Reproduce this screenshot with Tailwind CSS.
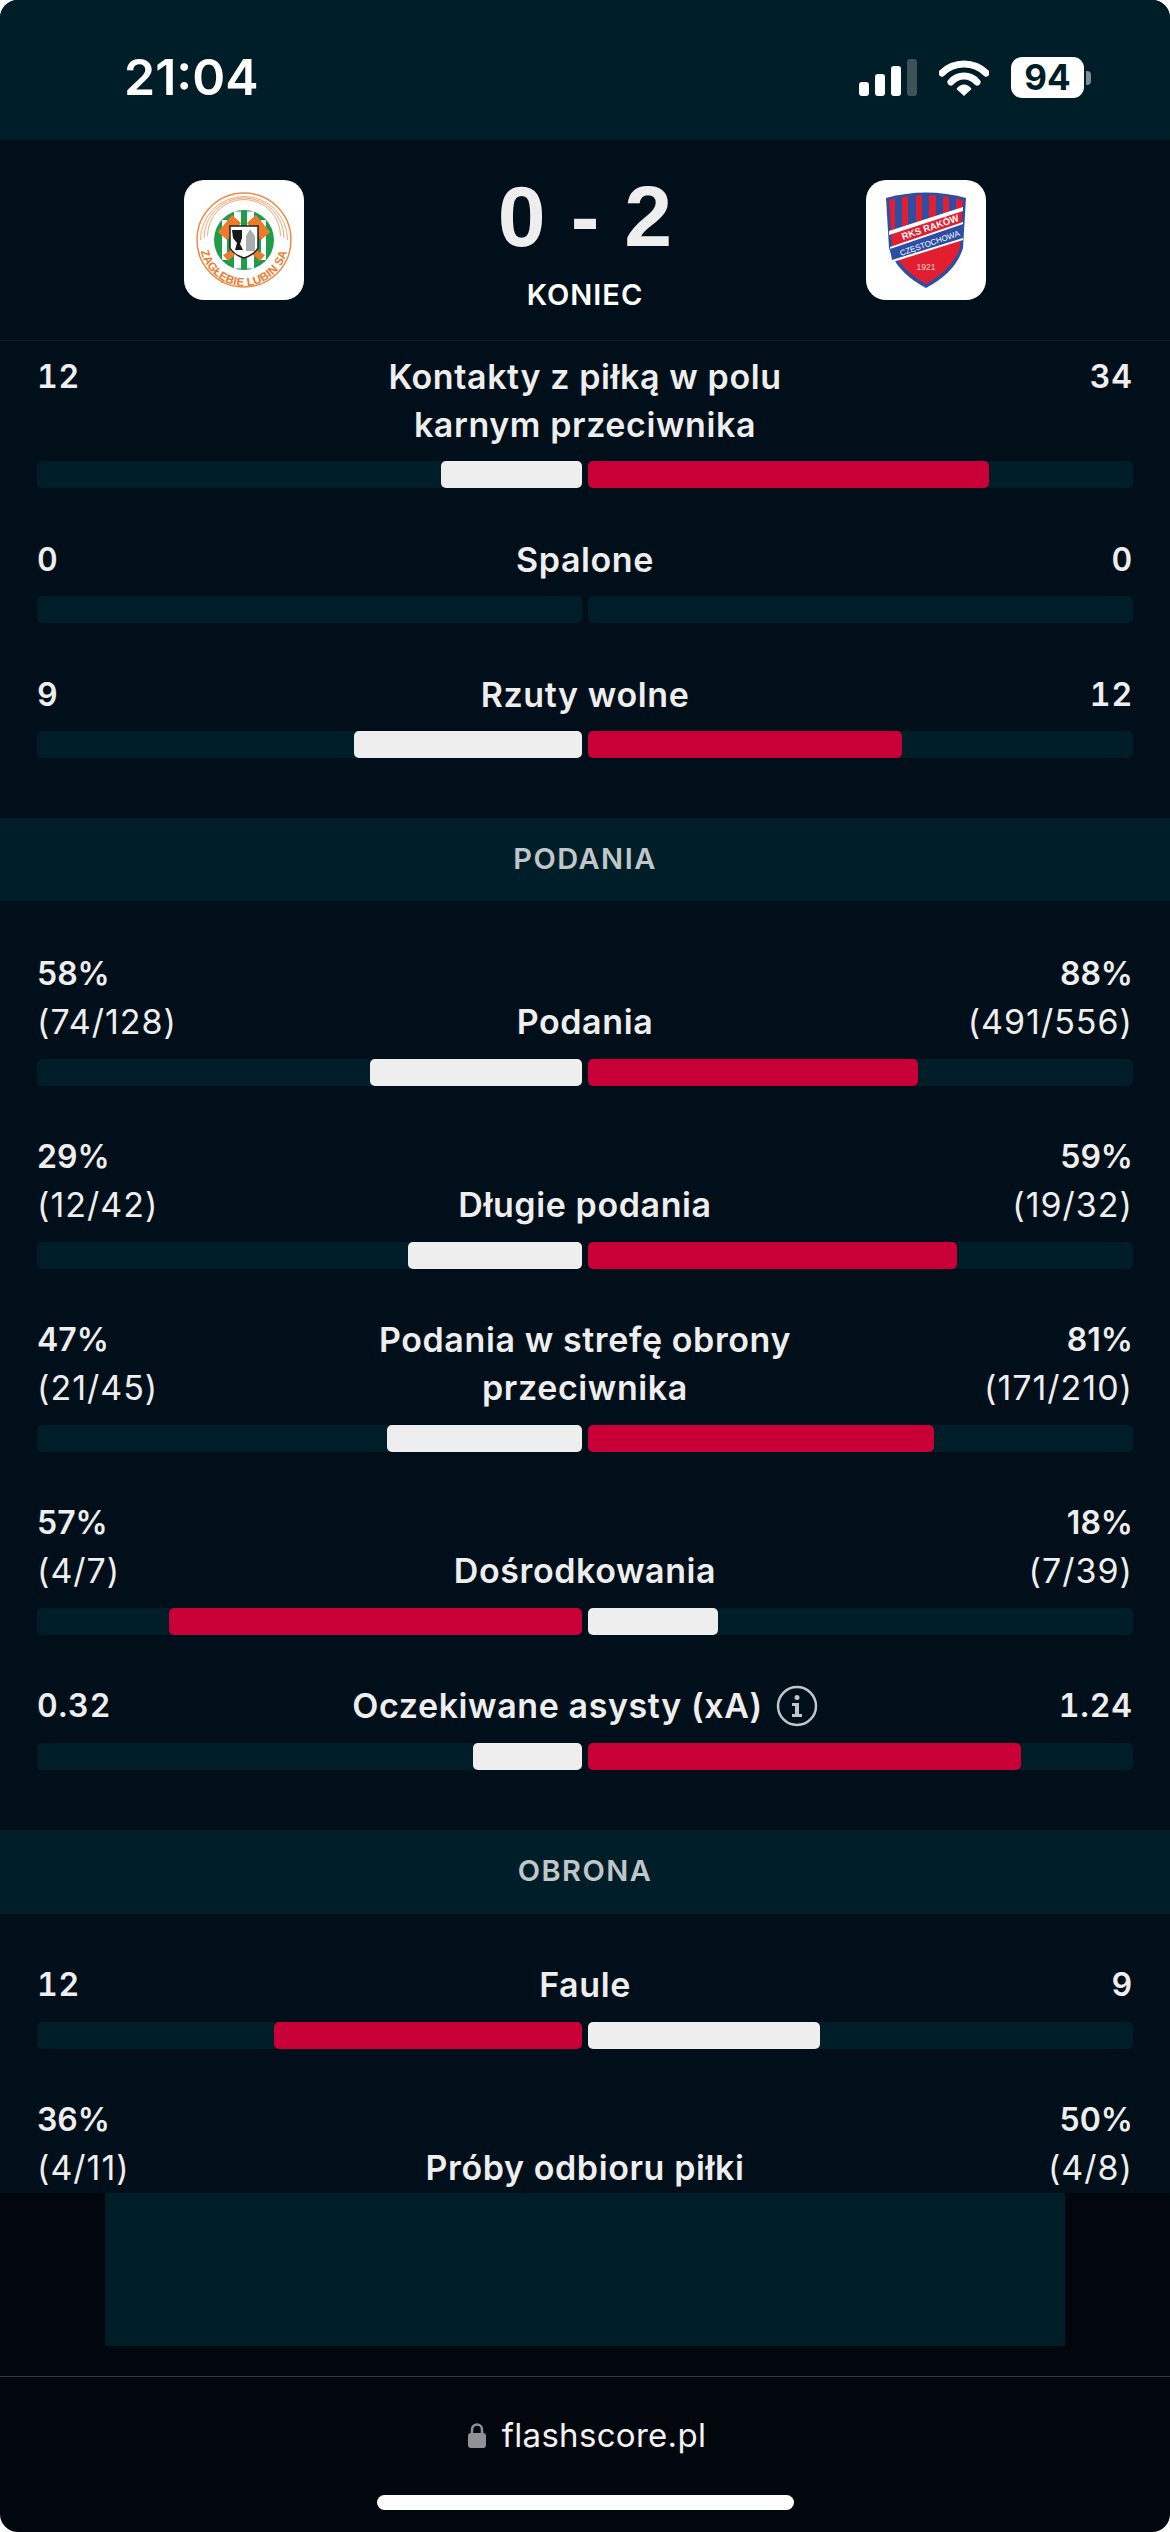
<!DOCTYPE html>
<html lang="pl">
<head>
  <meta charset="UTF-8" />
  <meta name="viewport" content="width=device-width, initial-scale=1.0" />
  <title>Flashscore</title>
  <script src="https://cdn.jsdelivr.net/npm/@tailwindcss/browser@4"></script>
</head>
<body class="bg-white">
  <div class="w-[1170px] h-[2532px] overflow-hidden rounded-[18px] bg-[#02070e] flex flex-col font-['Inter',sans-serif] text-[#eeeeee]">

    <!-- Status bar -->
    <div class="h-[140px] shrink-0 bg-[#001e28] flex items-start justify-between pl-[124px] pr-[79px] text-white">
      <div class="mt-[48px] text-[50px] leading-[58px] font-semibold">21:04</div>
      <div class="mt-[57px] flex items-start">
        <div class="flex items-end gap-[6px] h-[39px] mr-[22px]">
          <div class="w-[10px] h-[14px] rounded-[3px] bg-white"></div>
          <div class="w-[10px] h-[22px] rounded-[3px] bg-white"></div>
          <div class="w-[10px] h-[30px] rounded-[3px] bg-white"></div>
          <div class="w-[10px] h-[37px] rounded-[3px] bg-[#3f525a]"></div>
        </div>
        <svg class="mt-[2px] mr-[22px]" width="50" height="37" viewBox="0 0 50 37">
          <path d="M3 14 C15 2 35 2 47 14" fill="none" stroke="#fff" stroke-width="7" stroke-linecap="round" stroke-linejoin="round"/>
          <path d="M12 23 C19 15 31 15 38 23" fill="none" stroke="#fff" stroke-width="7" stroke-linecap="round"/>
          <path d="M17.5 30 C21 24 29 24 32.500 30 L25 37 Z" fill="#fff"/>
        </svg>
        <div class="w-[73px] h-[41px] rounded-[11px] bg-white text-[#001e28] text-[35px] leading-[41px] font-bold text-center">94</div>
        <div class="mt-[14px] ml-[2px] w-[5px] h-[14px] rounded-r-[4px] bg-[#7f8d93]"></div>
      </div>
    </div>

    <!-- Score header -->
    <div class="h-[201px] shrink-0 bg-[#010f1a] border-b border-[#06202b] flex items-start justify-between px-[184px] pt-[40px]">
      <div class="w-[120px] h-[120px] rounded-[20px] bg-white">
        <svg width="120" height="120" viewBox="0 0 120 120">
          <circle cx="60" cy="60" r="47" fill="none" stroke="#ee8a45" stroke-width="1.500"/>
          <path d="M16.500 60 A43.500 43.500 0 0 1 103.500 60" fill="none" stroke="#f3a673" stroke-width="1"/>
          <path d="M20 58 A40 40 0 0 1 100 58" fill="none" stroke="#f3a673" stroke-width="1"/>
          <path d="M23.500 56 A36.500 36.500 0 0 1 96.500 56" fill="none" stroke="#f3a673" stroke-width="1"/>
          <circle cx="60" cy="60" r="30" fill="#1f9b4c"/>
          <path d="M50 31.500 h7 v57 h-7 z M63 31.500 h7 v57 h-7 z M38 40 h5 v40 h-5 z M77 40 h5 v40 h-5 z" fill="#fff"/>
          <path d="M34 52 L48 35 L57 43 L43 60 Z M86 52 L72 35 L63 43 L77 60 Z M39 75 L48 70 L51 75 L44 81 Z M81 75 L72 70 L69 75 L76 81 Z" fill="#ee7a2b"/>
          <path d="M46 46 H74 V68 Q70 75 60 78 Q50 75 46 68 Z" fill="#fff" stroke="#222" stroke-width="1.500"/>
          <path d="M48 50 H58 V58 L56 64 L59 70 H51 L53 63 L49 58 Z" fill="#15181b"/>
          <path d="M62 56 L66 49 L71 56 V71 H62 Z" fill="#a9aeb2"/>
          <defs><path id="zl-arc" d="M14 62 A46 46 0 0 0 106 62"/></defs>
          <text font-family="Liberation Sans, sans-serif" font-weight="700" font-size="11.500" letter-spacing="0.5" fill="#ee7a2b" text-anchor="middle" dy="-2"><textPath href="#zl-arc" startOffset="50%">ZAGŁĘBIE LUBIN SA</textPath></text>
        </svg>
      </div>
      <div class="flex flex-col items-center">
        <div class="mt-[-14px] h-[100px] text-[86px] leading-[100px] font-bold font-['Liberation_Sans',sans-serif] whitespace-pre"><span>0</span><span class="mx-[25px]">-</span><span>2</span></div>
        <div class="mt-[11px] text-[29px] leading-[36px] font-semibold tracking-[1px] text-white">KONIEC</div>
      </div>
      <div class="w-[120px] h-[120px] rounded-[20px] bg-white">
        <svg width="120" height="120" viewBox="0 0 120 120">
          <path d="M20 18 Q60 7 100 18 L97 68 Q90 92 60 108 Q30 92 23 68 Z" fill="#2c4fa3"/>
          <path d="M23 20 Q60 10 97 20 L94 67 Q87 89 60 104 Q33 89 26 67 Z" fill="#e11f30"/>
          <path d="M29 18 h7 v32 h-7 z M42 14 h8 v32 h-8 z M56 13 h7 v29 h-7 z M70 14 h7 v24 h-7 z M83 16 h7 v17 h-7 z" fill="#2c4fa3"/>
          <path d="M23 51 L97 27 L97 31 L23 55 Z" fill="#fff"/>
          <path d="M24 67 L97 42 L97 60 L27 82 Z" fill="#fff"/>
          <path d="M24 69 L97 44 L97 58 L26 80 Z" fill="#2c4fa3"/>
          <text transform="translate(37 60) rotate(-19)" font-family="Liberation Sans, sans-serif" font-weight="700" font-size="9.500" fill="#fff">RKS RAKÓW</text>
          <text transform="translate(35 76) rotate(-19)" font-family="Liberation Sans, sans-serif" font-size="8" fill="#fff">CZĘSTOCHOWA</text>
          <text x="60" y="90" text-anchor="middle" font-family="Liberation Sans, sans-serif" font-size="8.500" fill="#f6d0d0">1921</text>
        </svg>
      </div>
    </div>

    <!-- Stats list, cut off at the ad slot -->
    <div class="h-[1852px] shrink-0 overflow-hidden bg-[#010f1a] text-[34px] leading-[48px] tracking-[0.6px]">

      <div class="pt-[12px] px-[37px]">
        <div class="flex justify-between items-start font-semibold"><span class="w-[150px] text-[32px] tracking-[0.9px] tabular-nums">12</span><span class="text-center">Kontakty z piłką w polu<br />karnym przeciwnika</span><span class="w-[150px] text-[32px] tracking-[0.9px] tabular-nums text-right">34</span></div>
        <div class="mt-[12px] flex gap-[6px]">
          <div class="flex-1 h-[27px] rounded-[5px] bg-[#001e28] flex justify-end"><div class="w-[141px] rounded-[5px] bg-[#eeeeee]"></div></div>
          <div class="flex-1 h-[27px] rounded-[5px] bg-[#001e28] flex"><div class="w-[401px] rounded-[5px] bg-[#c80037]"></div></div>
        </div>
      </div>

      <div class="mt-[48px] px-[37px]">
        <div class="flex justify-between items-start font-semibold"><span class="w-[150px] text-[32px] tracking-[0.9px] tabular-nums">0</span><span class="text-center">Spalone</span><span class="w-[150px] text-[32px] tracking-[0.9px] tabular-nums text-right">0</span></div>
        <div class="mt-[12px] flex gap-[6px]">
          <div class="flex-1 h-[27px] rounded-[5px] bg-[#001e28]"></div>
          <div class="flex-1 h-[27px] rounded-[5px] bg-[#001e28]"></div>
        </div>
      </div>

      <div class="mt-[48px] px-[37px]">
        <div class="flex justify-between items-start font-semibold"><span class="w-[150px] text-[32px] tracking-[0.9px] tabular-nums">9</span><span class="text-center">Rzuty wolne</span><span class="w-[150px] text-[32px] tracking-[0.9px] tabular-nums text-right">12</span></div>
        <div class="mt-[12px] flex gap-[6px]">
          <div class="flex-1 h-[27px] rounded-[5px] bg-[#001e28] flex justify-end"><div class="w-[228px] rounded-[5px] bg-[#eeeeee]"></div></div>
          <div class="flex-1 h-[27px] rounded-[5px] bg-[#001e28] flex"><div class="w-[314px] rounded-[5px] bg-[#c80037]"></div></div>
        </div>
      </div>

      <!-- PODANIA -->
      <div class="mt-[60px] h-[83px] pb-[2px] bg-[#001e28] flex items-center justify-center text-[29px] font-semibold tracking-[1.5px] text-[#c0c7ca]">PODANIA</div>

      <div class="mt-[49px] px-[37px]">
        <div class="flex justify-between items-end"><div class="w-[220px]"><div class="text-[32px] tracking-normal font-semibold">58%</div><div class="tracking-[1px]">(74/128)</div></div><span class="font-semibold text-center">Podania</span><div class="w-[220px] text-right"><div class="text-[32px] tracking-normal font-semibold">88%</div><div class="tracking-[1px]">(491/556)</div></div></div>
        <div class="mt-[13px] flex gap-[6px]">
          <div class="flex-1 h-[27px] rounded-[5px] bg-[#001e28] flex justify-end"><div class="w-[212px] rounded-[5px] bg-[#eeeeee]"></div></div>
          <div class="flex-1 h-[27px] rounded-[5px] bg-[#001e28] flex"><div class="w-[330px] rounded-[5px] bg-[#c80037]"></div></div>
        </div>
      </div>

      <div class="mt-[47px] px-[37px]">
        <div class="flex justify-between items-end"><div class="w-[220px]"><div class="text-[32px] tracking-normal font-semibold">29%</div><div class="tracking-[1px]">(12/42)</div></div><span class="font-semibold text-center">Długie podania</span><div class="w-[220px] text-right"><div class="text-[32px] tracking-normal font-semibold">59%</div><div class="tracking-[1px]">(19/32)</div></div></div>
        <div class="mt-[13px] flex gap-[6px]">
          <div class="flex-1 h-[27px] rounded-[5px] bg-[#001e28] flex justify-end"><div class="w-[174px] rounded-[5px] bg-[#eeeeee]"></div></div>
          <div class="flex-1 h-[27px] rounded-[5px] bg-[#001e28] flex"><div class="w-[369px] rounded-[5px] bg-[#c80037]"></div></div>
        </div>
      </div>

      <div class="mt-[47px] px-[37px]">
        <div class="flex justify-between items-end"><div class="w-[220px]"><div class="text-[32px] tracking-normal font-semibold">47%</div><div class="tracking-[1px]">(21/45)</div></div><span class="font-semibold text-center">Podania w strefę obrony<br />przeciwnika</span><div class="w-[220px] text-right"><div class="text-[32px] tracking-normal font-semibold">81%</div><div class="tracking-[1px]">(171/210)</div></div></div>
        <div class="mt-[13px] flex gap-[6px]">
          <div class="flex-1 h-[27px] rounded-[5px] bg-[#001e28] flex justify-end"><div class="w-[195px] rounded-[5px] bg-[#eeeeee]"></div></div>
          <div class="flex-1 h-[27px] rounded-[5px] bg-[#001e28] flex"><div class="w-[346px] rounded-[5px] bg-[#c80037]"></div></div>
        </div>
      </div>

      <div class="mt-[47px] px-[37px]">
        <div class="flex justify-between items-end"><div class="w-[220px]"><div class="text-[32px] tracking-normal font-semibold">57%</div><div class="tracking-[1px]">(4/7)</div></div><span class="font-semibold text-center">Dośrodkowania</span><div class="w-[220px] text-right"><div class="text-[32px] tracking-normal font-semibold">18%</div><div class="tracking-[1px]">(7/39)</div></div></div>
        <div class="mt-[13px] flex gap-[6px]">
          <div class="flex-1 h-[27px] rounded-[5px] bg-[#001e28] flex justify-end"><div class="w-[413px] rounded-[5px] bg-[#c80037]"></div></div>
          <div class="flex-1 h-[27px] rounded-[5px] bg-[#001e28] flex"><div class="w-[130px] rounded-[5px] bg-[#eeeeee]"></div></div>
        </div>
      </div>

      <div class="mt-[47px] px-[37px]">
        <div class="flex justify-between items-start font-semibold">
          <span class="w-[150px] text-[32px] tracking-[0.9px] tabular-nums">0.32</span>
          <span class="flex items-center gap-[13px]">Oczekiwane asysty (xA)
            <svg width="42" height="42" viewBox="0 0 42 42" fill="none">
              <circle cx="21" cy="21" r="19" stroke="#c0c7ca" stroke-width="2.500"/>
              <circle cx="21" cy="12.500" r="2.500" fill="#c0c7ca"/>
              <path d="M16 18 h7 v11 h3 v3 h-10 v-3 h3 v-8 h-3 z" fill="#c0c7ca"/>
            </svg>
          </span>
          <span class="w-[150px] text-[32px] tracking-[0.9px] tabular-nums text-right">1.24</span>
        </div>
        <div class="mt-[13px] flex gap-[6px]">
          <div class="flex-1 h-[27px] rounded-[5px] bg-[#001e28] flex justify-end"><div class="w-[109px] rounded-[5px] bg-[#eeeeee]"></div></div>
          <div class="flex-1 h-[27px] rounded-[5px] bg-[#001e28] flex"><div class="w-[433px] rounded-[5px] bg-[#c80037]"></div></div>
        </div>
      </div>

      <!-- OBRONA -->
      <div class="mt-[60px] h-[84px] pb-[2px] bg-[#001e28] flex items-center justify-center text-[29px] font-semibold tracking-[1.5px] text-[#c0c7ca]">OBRONA</div>

      <div class="mt-[47px] px-[37px]">
        <div class="flex justify-between items-start font-semibold"><span class="w-[150px] text-[32px] tracking-[0.9px] tabular-nums">12</span><span class="text-center">Faule</span><span class="w-[150px] text-[32px] tracking-[0.9px] tabular-nums text-right">9</span></div>
        <div class="mt-[13px] flex gap-[6px]">
          <div class="flex-1 h-[27px] rounded-[5px] bg-[#001e28] flex justify-end"><div class="w-[308px] rounded-[5px] bg-[#c80037]"></div></div>
          <div class="flex-1 h-[27px] rounded-[5px] bg-[#001e28] flex"><div class="w-[232px] rounded-[5px] bg-[#eeeeee]"></div></div>
        </div>
      </div>

      <div class="mt-[47px] px-[37px]">
        <div class="flex justify-between items-end"><div class="w-[220px]"><div class="text-[32px] tracking-normal font-semibold">36%</div><div class="tracking-[1px]">(4/11)</div></div><span class="font-semibold text-center">Próby odbioru piłki</span><div class="w-[220px] text-right"><div class="text-[32px] tracking-normal font-semibold">50%</div><div class="tracking-[1px]">(4/8)</div></div></div>
      </div>
    </div>

    <!-- Ad slot -->
    <div class="h-[153px] shrink-0 mx-[105px] bg-[#001e28]"></div>

    <!-- Safari bottom bar -->
    <div class="mt-[30px] flex-1 border-t border-[#33383d] flex flex-col items-center">
      <div class="mt-[36px] pl-[4px] flex items-center gap-[16px] text-[33px] leading-[44px] tracking-[0.3px] text-[#f2f2f2]">
        <svg width="18" height="25" viewBox="0 0 18 25"><path d="M4 11 V6.500 a5 5 0 0 1 10 0 V11" fill="none" stroke="#8e9196" stroke-width="2.500"/><rect x="0" y="10" width="18" height="15" rx="3" fill="#8e9196"/></svg>
        <span>flashscore.pl</span>
      </div>
      <div class="mt-[38px] w-[417px] h-[15px] rounded-full bg-white"></div>
    </div>
  </div>
</body>
</html>
